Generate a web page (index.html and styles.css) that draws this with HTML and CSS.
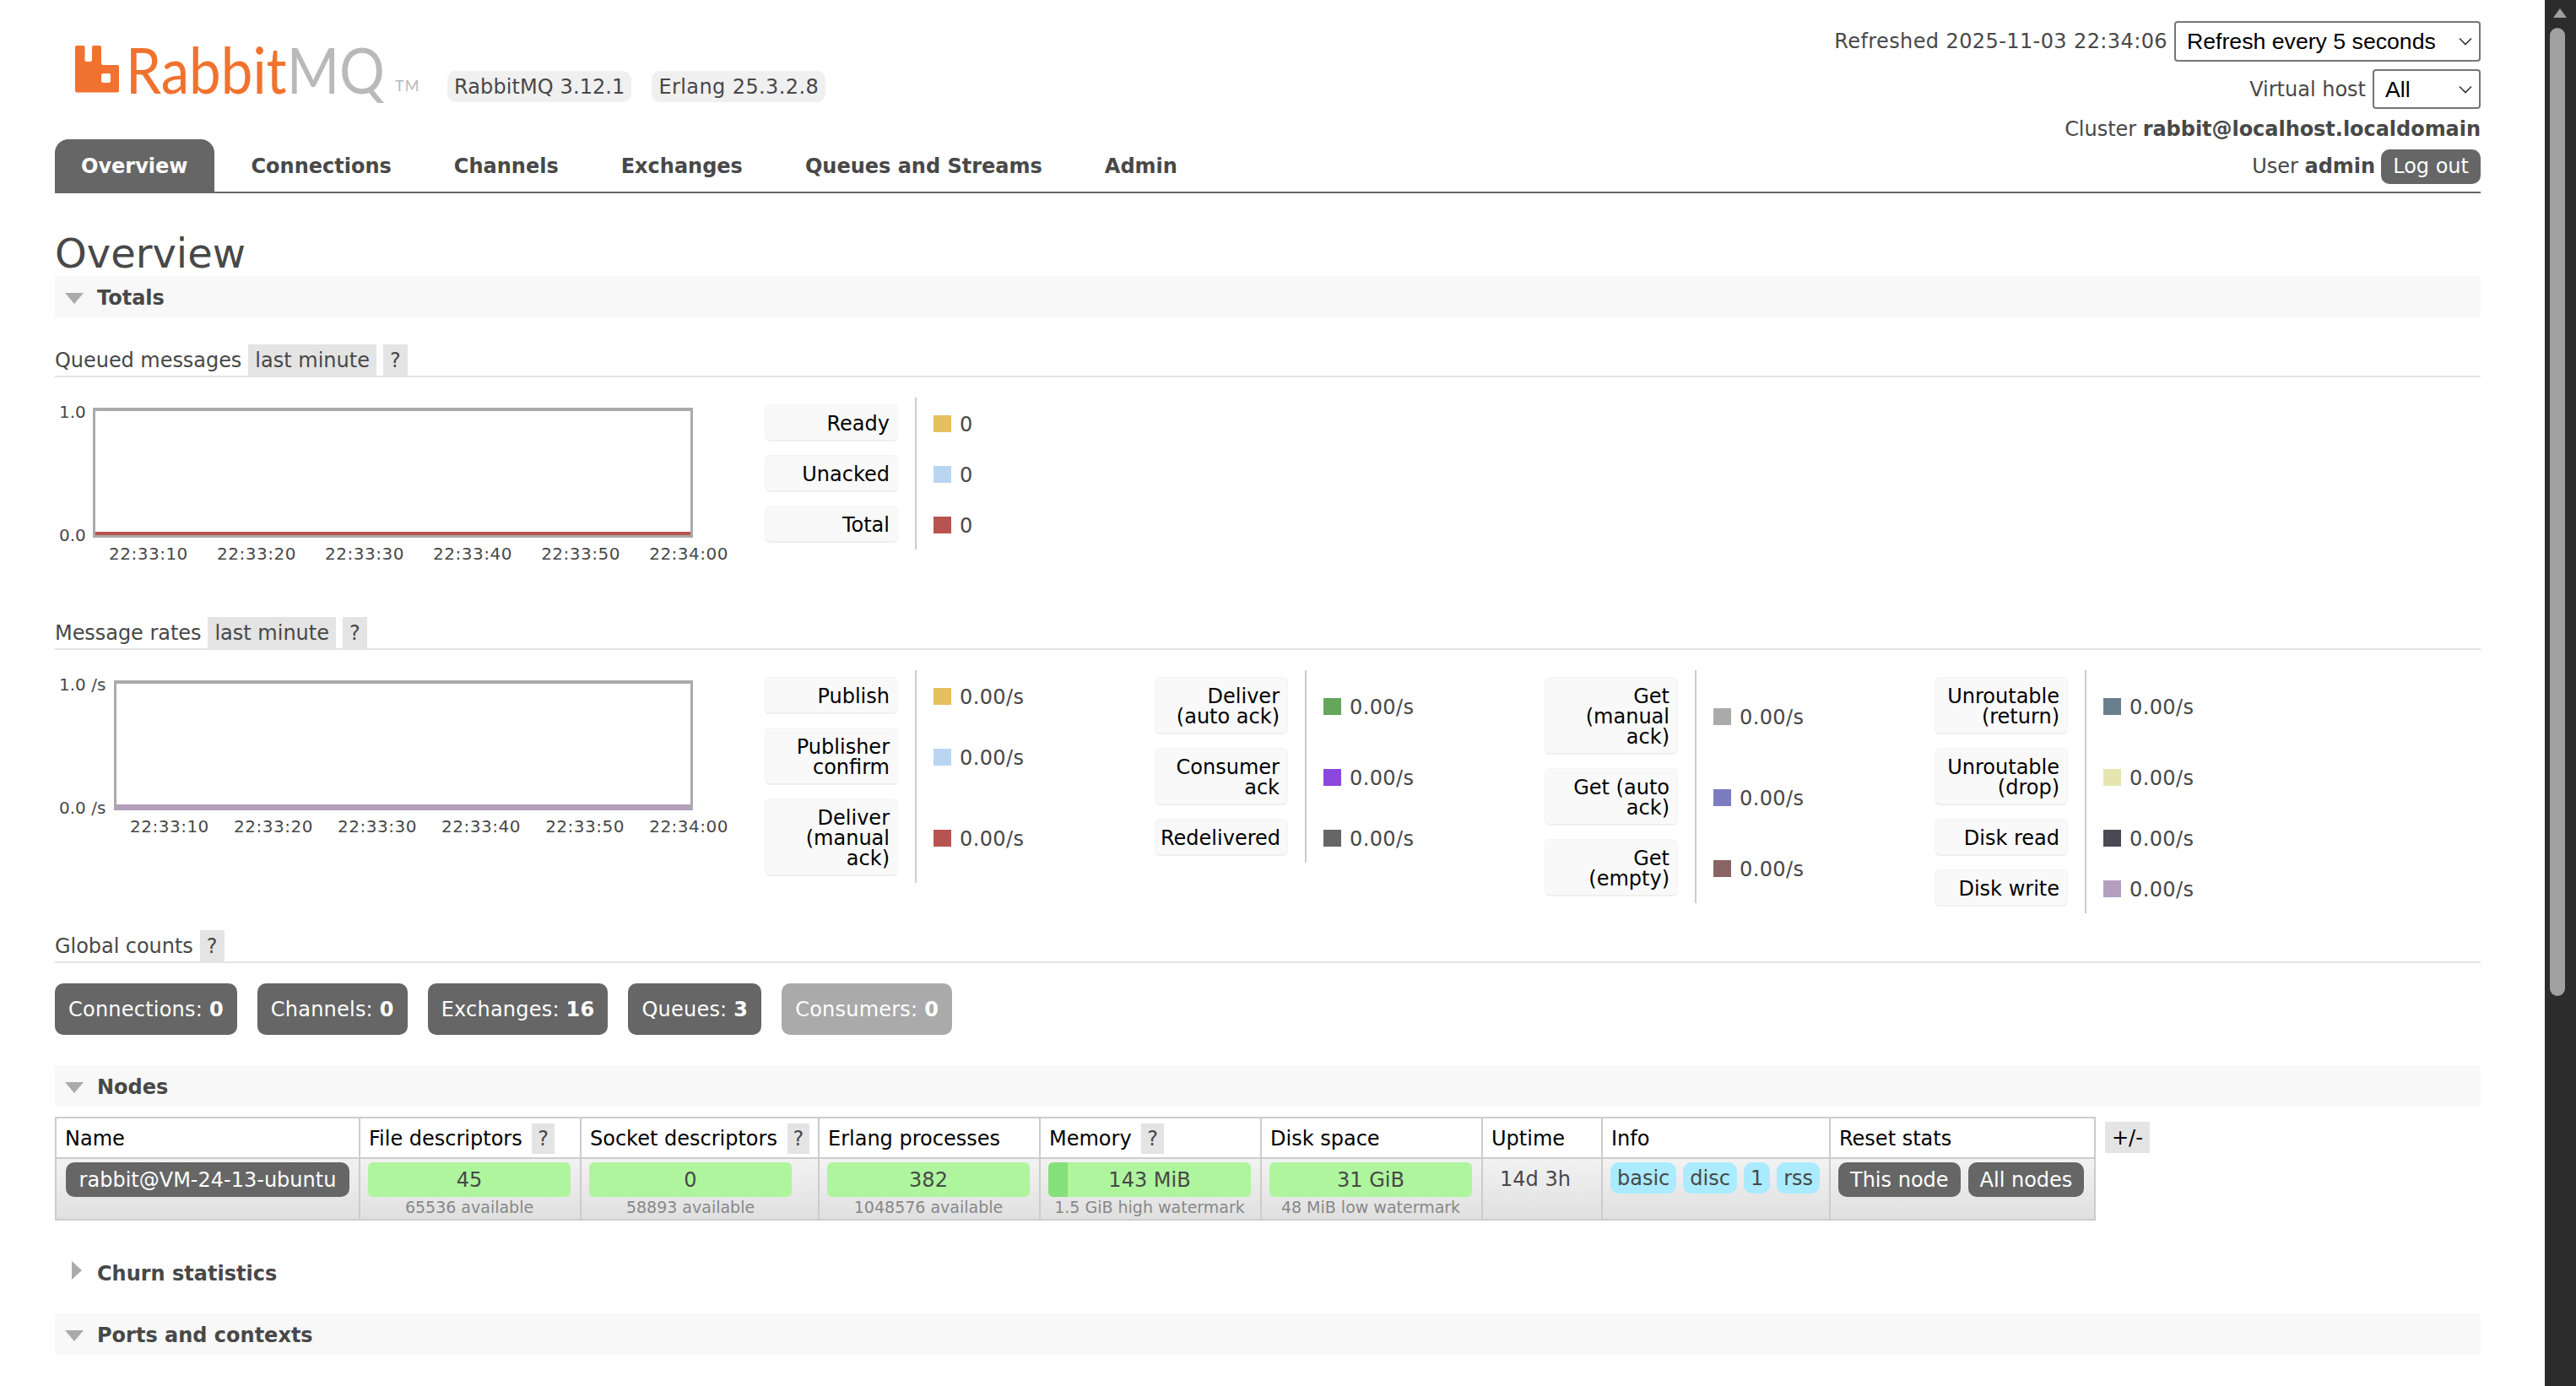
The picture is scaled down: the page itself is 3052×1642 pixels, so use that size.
FILE: index.html
```html
<!DOCTYPE html>
<html lang="en">
<head>
<meta charset="utf-8">
<title>RabbitMQ Management</title>
<link rel="stylesheet" href="styles.css">
</head>
<body>
<div class="page">
  <header class="header">
    <div class="header-left">
      <div class="brand">
        <div class="logo">
          <svg class="logo-icon" viewBox="0 0 52 55.5" width="52" height="55.5"><path fill="#f0722e" fill-rule="evenodd" d="M2 0H9.5a2 2 0 0 1 2 2V17a2 2 0 0 0 2 2H18a2 2 0 0 0 2-2V2a2 2 0 0 1 2-2H29a2 2 0 0 1 2 2V21a2 2 0 0 0 2 2H50a2 2 0 0 1 2 2V53.5a2 2 0 0 1-2 2H2a2 2 0 0 1-2-2V2a2 2 0 0 1 2-2ZM33 33a2 2 0 0 0-2 2V42a2 2 0 0 0 2 2H40a2 2 0 0 0 2-2V35a2 2 0 0 0-2-2Z"/></svg>
          <span class="logo-word"><span class="logo-rabbit">Rabbit</span><span class="logo-mq">MQ</span></span><span class="logo-tm">TM</span>
        </div>
        <span class="version">RabbitMQ 3.12.1</span>
        <span class="version version-erl">Erlang 25.3.2.8</span>
      </div>
      <nav class="tabs">
        <a class="tab active">Overview</a>
        <a class="tab">Connections</a>
        <a class="tab">Channels</a>
        <a class="tab">Exchanges</a>
        <a class="tab">Queues and Streams</a>
        <a class="tab">Admin</a>
      </nav>
    </div>
    <div class="login">
      <div class="login-row row-refresh"><span class="refreshed">Refreshed 2025-11-03 22:34:06</span>
        <select class="sel sel-refresh"><option>Refresh every 5 seconds</option></select></div>
      <div class="login-row row-vhost"><span>Virtual host</span>
        <select class="sel sel-vhost"><option>All</option></select></div>
      <div class="login-row row-cluster"><span>Cluster <b>rabbit@localhost.localdomain</b></span></div>
      <div class="login-row row-user"><span>User <b>admin</b></span><button class="logout">Log out</button></div>
    </div>
  </header>

  <h1 class="title">Overview</h1>

  <h2 class="section"><span class="tri down"></span>Totals</h2>

  <h3 class="sub first"><span class="sub-text">Queued messages</span><span class="help wide">last minute</span><span class="help">?</span></h3>
  <div class="stats row-queued">
    <div class="chart chart-a">
      <div class="yaxis"><span>1.0</span><span>0.0</span></div>
      <div class="chart-main">
        <div class="plot"><div class="plot-line red"></div></div>
        <div class="ticks"><span>22:33:10</span><span>22:33:20</span><span>22:33:30</span><span>22:33:40</span><span>22:33:50</span><span>22:34:00</span></div>
      </div>
    </div>
    <table class="legend">
      <tr><th><div>Ready</div></th><td><i class="sw c-yellow"></i>0</td></tr>
      <tr><th><div>Unacked</div></th><td><i class="sw c-blue"></i>0</td></tr>
      <tr><th><div>Total</div></th><td><i class="sw c-red"></i>0</td></tr>
    </table>
  </div>

  <h3 class="sub second"><span class="sub-text">Message rates</span><span class="help wide">last minute</span><span class="help">?</span></h3>
  <div class="stats row-rates">
    <div class="chart chart-b">
      <div class="yaxis"><span>1.0 /s</span><span>0.0 /s</span></div>
      <div class="chart-main">
        <div class="plot plot-purple"><div class="plot-line purple"></div></div>
        <div class="ticks"><span>22:33:10</span><span>22:33:20</span><span>22:33:30</span><span>22:33:40</span><span>22:33:50</span><span>22:34:00</span></div>
      </div>
    </div>
    <table class="legend">
      <tr><th><div>Publish</div></th><td><i class="sw c-yellow"></i>0.00/s</td></tr>
      <tr><th><div>Publisher confirm</div></th><td><i class="sw c-blue"></i>0.00/s</td></tr>
      <tr><th><div>Deliver (manual ack)</div></th><td><i class="sw c-red"></i>0.00/s</td></tr>
    </table>
    <table class="legend">
      <tr><th><div>Deliver (auto ack)</div></th><td><i class="sw c-green"></i>0.00/s</td></tr>
      <tr><th><div>Consumer ack</div></th><td><i class="sw c-violet"></i>0.00/s</td></tr>
      <tr><th><div>Redelivered</div></th><td><i class="sw c-dgrey"></i>0.00/s</td></tr>
    </table>
    <table class="legend">
      <tr><th><div>Get (manual ack)</div></th><td><i class="sw c-lgrey"></i>0.00/s</td></tr>
      <tr><th><div>Get (auto ack)</div></th><td><i class="sw c-indigo"></i>0.00/s</td></tr>
      <tr><th><div>Get (empty)</div></th><td><i class="sw c-brown"></i>0.00/s</td></tr>
    </table>
    <table class="legend">
      <tr><th><div>Unroutable (return)</div></th><td><i class="sw c-slate"></i>0.00/s</td></tr>
      <tr><th><div>Unroutable (drop)</div></th><td><i class="sw c-cream"></i>0.00/s</td></tr>
      <tr><th><div>Disk read</div></th><td><i class="sw c-ink"></i>0.00/s</td></tr>
      <tr><th><div>Disk write</div></th><td><i class="sw c-mauve"></i>0.00/s</td></tr>
    </table>
  </div>

  <h3 class="sub third"><span class="sub-text">Global counts</span><span class="help">?</span></h3>
  <div class="counts">
    <span class="count">Connections: <b>0</b></span>
    <span class="count">Channels: <b>0</b></span>
    <span class="count">Exchanges: <b>16</b></span>
    <span class="count">Queues: <b>3</b></span>
    <span class="count muted">Consumers: <b>0</b></span>
  </div>

  <h2 class="section nodes"><span class="tri down"></span>Nodes</h2>
  <div class="table-wrap">
    <table class="nodes-table">
      <colgroup><col class="w-name"><col class="w-file"><col class="w-sock"><col class="w-erl"><col class="w-mem"><col class="w-disk"><col class="w-up"><col class="w-info"><col class="w-reset"></colgroup>
      <thead><tr>
        <th>Name</th>
        <th>File descriptors <span class="help">?</span></th>
        <th>Socket descriptors <span class="help">?</span></th>
        <th>Erlang processes</th>
        <th>Memory <span class="help">?</span></th>
        <th>Disk space</th>
        <th>Uptime</th>
        <th>Info</th>
        <th>Reset stats</th>
      </tr></thead>
      <tbody><tr>
        <td><span class="pill node-pill">rabbit@VM-24-13-ubuntu</span></td>
        <td><div class="bar">45</div><div class="sub-note">65536 available</div></td>
        <td><div class="bar">0</div><div class="sub-note">58893 available</div></td>
        <td><div class="bar">382</div><div class="sub-note">1048576 available</div></td>
        <td><div class="bar bar-mem"><span class="bar-fill"></span>143 MiB</div><div class="sub-note">1.5 GiB high watermark</div></td>
        <td><div class="bar">31 GiB</div><div class="sub-note">48 MiB low watermark</div></td>
        <td class="uptime">14d 3h</td>
        <td><div class="tags"><span class="tag">basic</span><span class="tag">disc</span><span class="tag">1</span><span class="tag">rss</span></div></td>
        <td><div class="resets"><span class="pill">This node</span><span class="pill">All nodes</span></div></td>
      </tr></tbody>
    </table>
    <span class="help plusminus">+/-</span>
  </div>

  <h2 class="section plain churn"><span class="tri right"></span>Churn statistics</h2>
  <h2 class="section ports"><span class="tri down"></span>Ports and contexts</h2>
</div>
<div class="scrollbar"><span class="scroll-up"></span><span class="scroll-thumb"></span></div>
</body>
</html>
```
FILE: styles.css
```css
* { box-sizing: border-box; }
html, body { margin: 0; height: 100%; overflow: hidden; background: #fff; }
body { font-family: "DejaVu Sans", Verdana, sans-serif; font-size: 24px; color: #484848; }
.page { margin: 0 113px 0 65px; }

/* header */
.header { display: flex; justify-content: space-between; height: 229px; border-bottom: 2px solid #666; }
.header-left { display: flex; flex-direction: column; justify-content: space-between; }
.brand { display: flex; align-items: flex-start; padding-top: 54px; }
.logo { display: flex; align-items: flex-start; margin-left: 24px; width: 441px; height: 56px; line-height: 56px; font-family: "Lato", sans-serif; font-size: 76px; font-weight: 400; }
.logo-icon { flex: none; margin-right: 8px; }
.logo-word { display: block; width: 311px; white-space: nowrap; transform: scaleX(0.885); transform-origin: left center; }
.logo-rabbit { color: #f0722e; }
.logo-mq { color: #b9b9b9; }
.logo-tm { color: #b9b9b9; font-size: 18px; font-weight: 400; margin-left: 8px; padding-top: 19px; letter-spacing: 1px; }
.version { background: #f0f0f0; border-radius: 10px; height: 37px; line-height: 38px; margin-top: 30px; padding: 0 8px; margin-right: 24px; white-space: nowrap; letter-spacing: 0.1px; }
.version-erl { letter-spacing: 0.4px; }
.tabs { display: flex; gap: 12px; font-weight: bold; height: 62px; }
.tab { display: block; padding: 1px 31px 0; line-height: 62px; border-radius: 16px 16px 0 0; white-space: nowrap; }
.tab.active { background: #666; color: #fff; padding-right: 32px; }
.login { display: flex; flex-direction: column; align-items: flex-end; padding-top: 25px; }
.login-row { display: flex; align-items: center; white-space: nowrap; }
.refreshed { letter-spacing: 0.4px; }
.row-refresh { height: 48px; gap: 8px; }
.row-vhost { height: 47px; margin-top: 9px; gap: 8px; }
.row-cluster { height: 30px; margin-top: 9px; letter-spacing: -0.04px; }
.row-user { height: 42px; margin-top: 8px; }
.sel { appearance: none; -webkit-appearance: none; font-family: "Liberation Sans", Arial, sans-serif; font-size: 26.67px; color: #000; border: 2px solid #767676; border-radius: 4px; height: 100%; padding: 0 30px 0 13px; margin: 0; background: #fff url("data:image/svg+xml,%3Csvg xmlns='http://www.w3.org/2000/svg' width='16' height='10'%3E%3Cpath d='M1 1.5l7 7 7-7' fill='none' stroke='%23333' stroke-width='1.6'/%3E%3C/svg%3E") no-repeat right 8px center; }
.sel-refresh { width: 363px; }
.sel-vhost { width: 128px; }
.logout { font: inherit; color: #fff; background: #666; border: 0; border-radius: 10px; height: 41px; padding: 0 14px; margin-left: 7px; }

/* headings */
.title { margin: 0; font-size: 48px; font-weight: normal; line-height: 50px; padding-top: 46px; height: 98px; }
.section { display: flex; align-items: center; margin: 0; height: 49px; padding: 2px 0 0 50px; background: #f8f8f8; font-size: 24px; font-weight: bold; position: relative; }
.section.nodes { margin-top: 36px; }
.section.plain { background: none; margin-top: 37px; }
.section.ports { margin-top: 24px; }
.tri { position: absolute; width: 0; height: 0; }
.tri.down { left: 12px; top: 20px; border-left: 11px solid transparent; border-right: 11px solid transparent; border-top: 13px solid #aaa; }
.tri.right { left: 20px; top: 11px; border-top: 11px solid transparent; border-bottom: 11px solid transparent; border-left: 12px solid #aaa; }
.sub { display: flex; align-items: flex-start; margin: 0; height: 39px; border-bottom: 2px solid #e4e4e4; font-size: 24px; font-weight: normal; white-space: nowrap; }
.sub-text { line-height: 39px; letter-spacing: -0.05px; }
.sub.first { margin-top: 32px; }
.sub.second { margin-top: 65px; }
.sub.third { margin-top: 20px; }
.help { display: inline-block; height: 37px; line-height: 39px; padding: 0 8px; background: #e4e4e4; margin-left: 8px; font-size: 24px; font-weight: normal; }

/* charts */
.stats { display: flex; align-items: flex-start; }
.chart { display: flex; width: 841px; flex: none; margin-top: 36px; font-size: 20px; }
.yaxis { display: flex; flex-direction: column; justify-content: space-between; height: 166px; margin-top: -5px; padding-left: 5px; line-height: 20px; white-space: nowrap; }
.chart-a .yaxis { width: 45px; flex: none; }
.chart-b .yaxis { width: 70px; flex: none; }
.chart-main { flex: 1; min-width: 0; }
.plot { display: flex; align-items: flex-end; height: 154px; margin-right: 85px; border: 3px solid #aaa; border-top-width: 4px; background: #fff; }
.plot-line { width: 100%; height: 4px; }
.plot-line.red { background: #b85450; }
.plot-line.purple { background: #b59fbb; }
.plot-purple { border-bottom-color: #b59fbb; }
.ticks { display: flex; justify-content: space-between; margin: 9px 43px 0 19px; line-height: 20px; white-space: nowrap; letter-spacing: 0.5px; }

/* legends */
.legend { border-collapse: collapse; flex: none; width: 462px; margin-top: 24px; table-layout: fixed; }
.legend th { width: 179px; padding: 0 20px 0 0; font-weight: normal; text-align: right; color: #000; vertical-align: middle; }
.legend th div { margin: 8px 0; padding: 10px 9px 7px 6px; background: #f9f9f9; border-radius: 6px; border: 1px solid #f4f4f4; border-bottom: 2px solid #efefef; line-height: 24px; }
.legend td { border-left: 2px solid #ccc; padding: 4px 0 0 20px; vertical-align: middle; white-space: nowrap; letter-spacing: 0.4px; }
.sw { display: inline-block; width: 21px; height: 20px; margin-right: 10px; vertical-align: -1px; }
.c-yellow { background: #e4c15c; }
.c-blue { background: #b8d5f2; }
.c-red { background: #b85450; }
.c-green { background: #65a65c; }
.c-violet { background: #8c46e0; }
.c-dgrey { background: #666; }
.c-lgrey { background: #aaa; }
.c-indigo { background: #7c7cc0; }
.c-brown { background: #8a6464; }
.c-slate { background: #697f8e; }
.c-cream { background: #e6e4b0; }
.c-ink { background: #4a4a56; }
.c-mauve { background: #b59fc0; }

/* counts */
.counts { display: flex; gap: 24px; margin-top: 24px; }
.count { display: block; height: 61px; line-height: 63px; padding: 0 16px; background: #666; color: #fff; border-radius: 10px; white-space: nowrap; letter-spacing: 0.22px; }
.count.muted { background: #aaa; }

/* nodes */
.table-wrap { display: flex; align-items: flex-start; margin-top: 12px; }
.nodes-table { border-collapse: collapse; table-layout: fixed; width: 2416px; color: #000; border-top: 2px solid #ccc; border-bottom: 2px solid #ccc; }
.w-name { width: 360px; } .w-file { width: 262px; } .w-sock { width: 282px; } .w-erl { width: 262px; } .w-mem { width: 262px; } .w-disk { width: 262px; } .w-up { width: 142px; } .w-info { width: 270px; } .w-reset { width: 314px; }
.nodes-table th, .nodes-table td { border-left: 2px solid #ccc; border-right: 2px solid #ccc; vertical-align: top; }
.nodes-table th { height: 48px; padding: 2px 10px 0; font-weight: normal; text-align: left; vertical-align: middle; white-space: nowrap; border-bottom: 2px solid #ccc; }
.nodes-table .help { height: 36px; line-height: 36px; padding: 0 7px; margin-left: 4px; color: #484848; }
.nodes-table td { height: 73px; padding: 4px 9px 0; background: linear-gradient(#f2f2f2, #e0e0e0); color: #484848; }
.pill { display: block; height: 41px; line-height: 43px; padding: 0 13px; background: #666; color: #fff; border-radius: 10px; white-space: nowrap; text-align: center; }
.node-pill { margin: 0 2px; }
.bar { position: relative; width: 240px; height: 41px; line-height: 43px; background: #aef59e; border-radius: 6px; text-align: center; overflow: hidden; }
.bar-fill { position: absolute; left: 0; top: 0; bottom: 0; width: 23px; background: #84e07a; }
.sub-note { width: 240px; font-size: 19px; line-height: 24px; color: #888; text-align: center; white-space: nowrap; }
.uptime { padding-left: 20px !important; line-height: 40px; }
.tags { display: flex; gap: 8px; }
.tag { display: block; height: 37px; line-height: 39px; padding: 0 8px; background: #aaebff; border-radius: 10px; white-space: nowrap; }
.resets { display: flex; gap: 9px; }
.resets .pill { padding: 0 14px; }
.plusminus { margin-left: 11px; margin-top: 6px; padding: 0 8px; color: #000; }

/* scrollbar */
.scrollbar { position: fixed; top: 0; right: 0; bottom: 0; width: 37px; background: #2c2c2c; }
.scroll-up { position: absolute; left: 10px; top: 10px; width: 0; height: 0; border-left: 8px solid transparent; border-right: 8px solid transparent; border-bottom: 11px solid #a0a0a0; }
.scroll-thumb { position: absolute; left: 6px; top: 33px; width: 18px; height: 1147px; border-radius: 9px; background: #a0a0a0; }
```
